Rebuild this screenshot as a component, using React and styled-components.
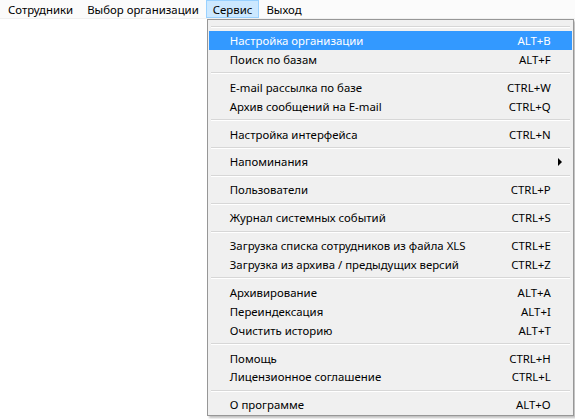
import React from 'react'
import styled, { createGlobalStyle } from 'styled-components'

const GlobalStyle = createGlobalStyle`
  html, body {
    margin: 0;
    padding: 0;
    background: #fff;
  }
  body {
    font-family: "Noto Sans", "Open Sans", sans-serif;
    font-size: 11.4px;
    color: #000;
  }
`

const topMenu = ['Сотрудники', 'Выбор организации', 'Сервис', 'Выход']

const groups = [
    [
        { label: 'Настройка организации', key: 'ALT+B', active: true },
        { label: 'Поиск по базам', key: 'ALT+F' },
    ],
    [
        { label: 'E-mail рассылка по базе', key: 'CTRL+W' },
        { label: 'Архив сообщений на E-mail', key: 'CTRL+Q' },
    ],
    [{ label: 'Настройка интерфейса', key: 'CTRL+N' }],
    [{ label: 'Напоминания', sub: true }],
    [{ label: 'Пользователи', key: 'CTRL+P' }],
    [{ label: 'Журнал системных событий', key: 'CTRL+S' }],
    [
        { label: 'Загрузка списка сотрудников из файла XLS', key: 'CTRL+E' },
        { label: 'Загрузка из архива / предыдущих версий', key: 'CTRL+Z' },
    ],
    [
        { label: 'Архивирование', key: 'ALT+A' },
        { label: 'Переиндексация', key: 'ALT+I' },
        { label: 'Очистить историю', key: 'ALT+T' },
    ],
    [
        { label: 'Помощь', key: 'CTRL+H' },
        { label: 'Лицензионное соглашение', key: 'CTRL+L' },
    ],
    [{ label: 'О программе', key: 'ALT+O' }],
]

const App = () => {
    return (
        <Page>
            <GlobalStyle />
            <MenuBar>
                {topMenu.map((name) => (
                    <BarItem key={name} open={name === 'Сервис'}>
                        {name}
                        {name === 'Сервис' && (
                            <Dropdown>
                                {groups.map((group, gi) => (
                                    <React.Fragment key={gi}>
                                        <Separator />
                                        {group.map((item) => (
                                            <Item key={item.label} active={item.active}>
                                                <span>{item.label}</span>
                                                {item.sub ? <Arrow /> : <Shortcut>{item.key}</Shortcut>}
                                            </Item>
                                        ))}
                                    </React.Fragment>
                                ))}
                            </Dropdown>
                        )}
                    </BarItem>
                ))}
            </MenuBar>
        </Page>
    )
}

export default App

const Page = styled.div`
    width: 575px;
    height: 419px;
    background: #fff;
    overflow: hidden;
`

const MenuBar = styled.div`
    display: flex;
    align-items: stretch;
    height: 18px;
    padding-left: 1px;
    background: #fbfbfb;
    border-bottom: 1px solid #f0f0f0;
`

const BarItem = styled.div`
    position: relative;
    display: flex;
    align-items: center;
    padding: 0 6px;
    border: 1px solid ${(p) => (p.open ? '#99d1ff' : 'transparent')};
    background: ${(p) => (p.open ? '#cce8ff' : 'transparent')};
    white-space: nowrap;
    cursor: default;
`

const Dropdown = styled.div`
    position: absolute;
    top: 18px;
    left: 0;
    width: 367px;
    box-sizing: border-box;
    display: flex;
    flex-direction: column;
    padding: 2px 1px 1px;
    background: #f0f0f0;
    border: 1px solid #979797;
    box-shadow: 2px 2px 2px rgba(0, 0, 0, 0.25);
`

const Separator = styled.div`
    height: 9px;
    margin: 0 2px;
    display: flex;
    align-items: center;

    &::before {
        content: '';
        flex: 1;
        height: 1px;
        background: #d7d7d7;
        border-bottom: 1px solid #fff;
    }
`

const Item = styled.div`
    display: flex;
    align-items: center;
    justify-content: space-between;
    height: 18.9px;
    padding: 0 21px 0 21px;
    background: ${(p) => (p.active ? '#3399ff' : 'transparent')};
    color: ${(p) => (p.active ? '#fff' : '#000')};
    white-space: nowrap;
`

const Shortcut = styled.span`
    text-align: right;
`

const Arrow = styled.span`
    width: 0;
    height: 0;
    margin-right: -11px;
    border-top: 4px solid transparent;
    border-bottom: 4px solid transparent;
    border-left: 4px solid #000;
`
